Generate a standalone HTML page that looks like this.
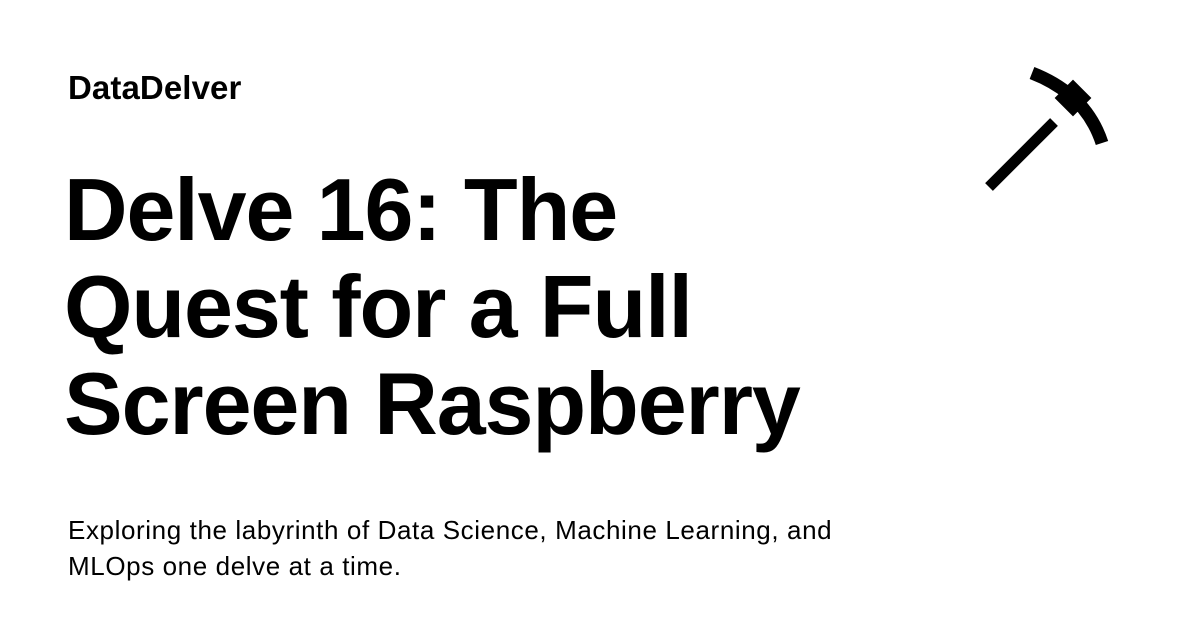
<!DOCTYPE html>
<html><head><meta charset="utf-8"><style>
body{margin:0;width:1200px;height:630px;background:#fff;position:relative;overflow:hidden;font-family:"Liberation Sans",sans-serif;color:#000}
.brand{position:absolute;left:68px;top:69px;font-size:33px;font-weight:bold;letter-spacing:0.1px}
.title{position:absolute;left:64px;top:161px;font-size:88px;font-weight:bold;line-height:97px;letter-spacing:-1.1px}
.sub{position:absolute;left:68px;top:512px;font-size:26px;line-height:36px;letter-spacing:0.6px}
svg{position:absolute;left:0;top:0}
</style></head><body>
<div class="brand">DataDelver</div>
<div class="title">Delve 16: The<br>Quest for a Full<br>Screen Raspberry</div>
<div class="sub">Exploring the labyrinth of Data Science, Machine Learning, and<br>MLOps one delve at a time.</div>
<svg width="1200" height="630">
<path d="M1032,73 Q1086,94 1102,143" stroke="#000" stroke-width="13" fill="none"/>
<line x1="989" y1="187" x2="1054" y2="122" stroke="#000" stroke-width="11"/>
<rect x="1060" y="85" width="26" height="26" transform="rotate(45 1073 98)" fill="#000"/>
</svg>
</body></html>
